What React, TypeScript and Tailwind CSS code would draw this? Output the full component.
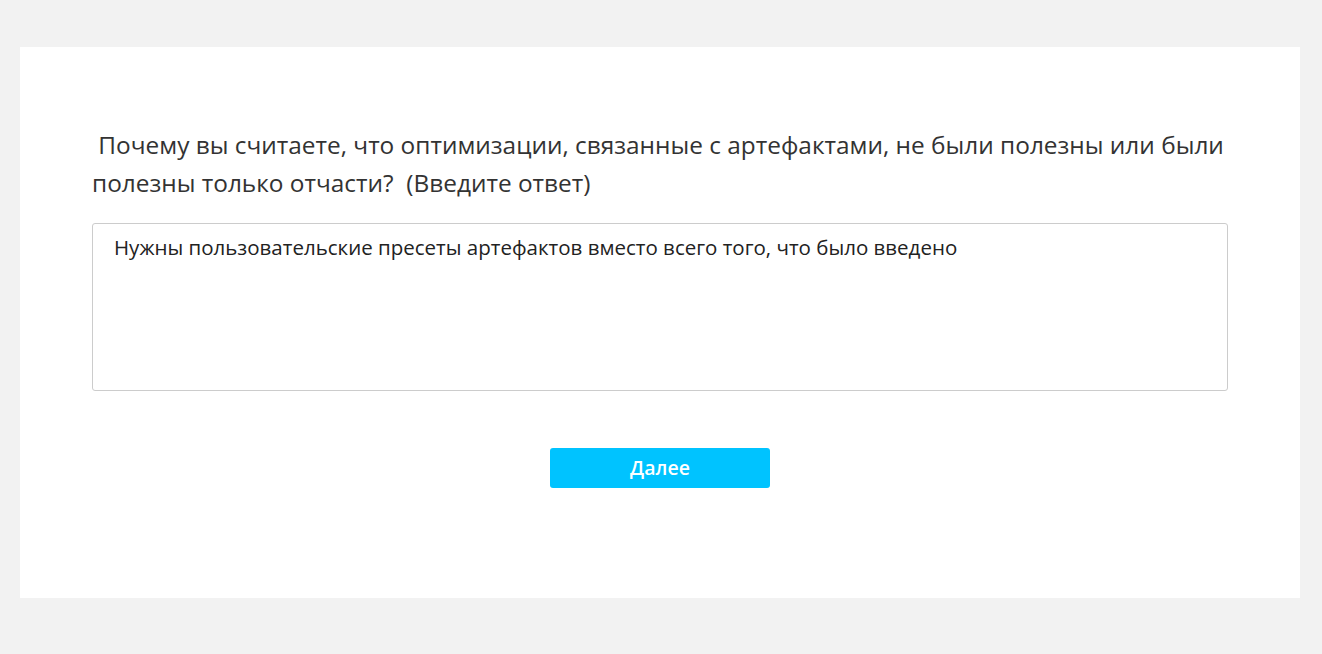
import React, { useState } from 'react';

export default function App() {
  const [answer, setAnswer] = useState(
    'Нужны пользовательские пресеты артефактов вместо всего того, что было введено'
  );

  return (
    <div
      className="min-h-[654px] w-full bg-[#f2f2f2] pt-[47px] pb-[56px] px-[20px]"
      style={{ fontFamily: '"Open Sans", "Noto Sans", sans-serif' }}
    >
      <div className="bg-white w-[1280px] h-[551px] pt-[79px] px-[72px]">
        <div className="text-[24.4px] leading-[38px] text-[#333333] w-[1140px]">
          &nbsp;Почему вы считаете, что оптимизации, связанные с артефактами, не были полезны или были
          полезны только отчасти?&nbsp; (Введите ответ)
        </div>

        <textarea
          value={answer}
          onChange={(e) => setAnswer(e.target.value)}
          className="mt-[21px] block w-[1136px] h-[168px] resize-none rounded-[3px] border border-[#cccccc] px-[21px] py-[7px] text-[20.5px] leading-[32px] text-[#222222] outline-none"
        />

        <div className="flex justify-center pt-[57px]">
          <button className="w-[220px] h-[40px] rounded-[3px] bg-[#00c3ff] text-white text-[19.5px] font-semibold">
            Далее
          </button>
        </div>
      </div>
    </div>
  );
}
